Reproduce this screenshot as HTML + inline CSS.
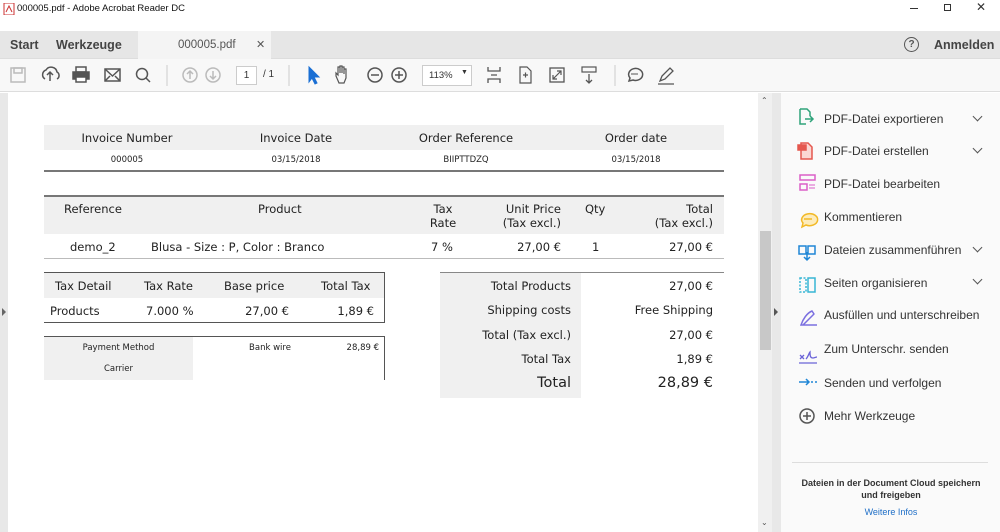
<!DOCTYPE html>
<html><head><meta charset="utf-8"><style>
*{margin:0;padding:0;box-sizing:border-box}
body{width:1000px;height:532px;overflow:hidden;position:relative;background:#fff;font-family:"Liberation Sans",sans-serif;color:#333}
.a{position:absolute}
.d{font-family:"DejaVu Sans","Liberation Sans",sans-serif;color:#222;white-space:nowrap}
.c{text-align:center}.r{text-align:right}
.g{background:#f0f0f0}
.ic{position:absolute}
.side{position:absolute;left:824px;font-size:12px;color:#333;white-space:nowrap}
.chev{position:absolute;left:974px;width:7px;height:7px;border-right:1.6px solid #555;border-bottom:1.6px solid #555;transform:rotate(45deg)}
</style></head><body>
<div class="a" style="left:0;top:0;width:1000px;height:31px;background:#fff"></div>
<svg class="ic" style="left:3px;top:3px" width="12" height="12"><rect x="1" y="0" width="10" height="12" fill="#fff" stroke="#c33"/><path d="M3 9 L6 3 L9 9" stroke="#c33" fill="none"/></svg>
<div class="a" style="left:17px;top:3px;font-size:9.5px;color:#111">000005.pdf - Adobe Acrobat Reader DC</div>
<div class="a" style="left:910px;top:8px;width:8px;height:1px;background:#333"></div>
<div class="a" style="left:944px;top:4px;width:7px;height:7px;border:1px solid #333"></div>
<div class="a" style="left:976px;top:0px;font-size:12px;color:#333">✕</div>
<div class="a" style="left:0;top:31px;width:1000px;height:28px;background:#e6e6e6;border-bottom:1px solid #ddd"></div>
<div class="a" style="left:138px;top:31px;width:133px;height:28px;background:#f4f4f4"></div>
<div class="a" style="left:10px;top:38px;font-size:12.5px;font-weight:bold;color:#444">Start</div>
<div class="a" style="left:56px;top:38px;font-size:12.5px;font-weight:bold;color:#444">Werkzeuge</div>
<div class="a" style="left:178px;top:39px;font-size:11.5px;color:#555">000005.pdf</div>
<div class="a" style="left:256px;top:38px;font-size:11px;color:#555">✕</div>
<div class="a" style="left:904px;top:37px;width:15px;height:15px;border:1.3px solid #555;border-radius:50%;font-size:10px;text-align:center;line-height:13px;color:#555;font-weight:bold">?</div>
<div class="a" style="left:934px;top:38px;font-size:12.5px;font-weight:bold;color:#444">Anmelden</div>
<div class="a" style="left:0;top:59px;width:1000px;height:33px;background:#f8f8f8;border-bottom:1px solid #ddd"></div>
<svg class="ic" style="left:0;top:59px" width="700" height="33" fill="none" stroke="#555" stroke-width="1.5">
<rect x="11" y="9" width="14" height="14" stroke="#bbb"/><rect x="14" y="9" width="8" height="5" stroke="#bbb"/>
<path d="M45 20 a5 5 0 0 1 1-9 a6 6 0 0 1 11 2 a4 4 0 0 1 0 7 M50 22 V13 M47 16 l3-3 3 3"/>
<rect x="73" y="13" width="16" height="7" fill="#555"/><rect x="76" y="8" width="10" height="5"/><rect x="76" y="18" width="10" height="5" fill="#fff"/>
<rect x="105" y="10" width="15" height="12"/><path d="M105 10 l7.5 7 7.5-7 M105 22 l5-5 M120 22 l-5-5"/>
<circle cx="142" cy="15" r="5.5"/><path d="M146 19 l4 4"/>
<path d="M167 6 V27" stroke="#ccc" stroke-width="1"/>
<circle cx="190" cy="16" r="7" stroke="#bbb"/><path d="M190 20 V12 M187 15 l3-3 3 3" stroke="#bbb"/>
<circle cx="213" cy="16" r="7" stroke="#bbb"/><path d="M213 12 V20 M210 17 l3 3 3-3" stroke="#bbb"/>
<path d="M289 6 V27" stroke="#ccc" stroke-width="1"/>
<path d="M309 8 V23 l3-4 3 6 2-1 -3-6 5 0 z" fill="#1a6fd4" stroke="#1a6fd4" stroke-width="1"/>
<path d="M339 24 l-3-7 v-3 l2 2 v-8 h2 v6 V7 h2 v7 V8 h2 v7 v-5 h2 v9 l-2 5 z" stroke-width="1.2"/>
<circle cx="375" cy="16" r="7"/><path d="M371 16 h8"/>
<circle cx="399" cy="16" r="7"/><path d="M395 16 h8 M399 12 v8"/>
<path d="M488 8 v4 h12 v-4 M488 24 v-4 h12 v4 M491 16 h6" stroke-width="1.3"/>
<path d="M520 8 h7 l4 4 v12 h-11 z M523 16 h5 M525.5 13.5 v5" stroke-width="1.2"/>
<rect x="550" y="9" width="14" height="14" stroke-width="1.3"/><path d="M553 20 l8-8 M557 12 h4 v4 M553 16 v4 h4" stroke-width="1.2"/>
<rect x="582" y="8" width="14" height="5" stroke-width="1.2"/><path d="M589 15 v9 M586 21 l3 3 3-3" stroke-width="1.3"/>
<path d="M615 6 V27" stroke="#ccc" stroke-width="1"/>
<path d="M629 22 l1-3 a7 6 0 1 1 3 2 z"/><path d="M631 15 h7" stroke-width="1"/>
<path d="M660 22 l2-5 8-8 3 3 -8 8 z M658 25 h16" stroke-width="1.3"/>
</svg>
<div class="a" style="left:236px;top:66px;width:21px;height:19px;background:#fff;border:1px solid #ccc;font-size:10px;text-align:center;line-height:17px;color:#333">1</div>
<div class="a" style="left:263px;top:69px;font-size:10px;color:#333">/ 1</div>
<div class="a" style="left:422px;top:65px;width:50px;height:21px;background:#fff;border:1px solid #ccc;font-size:9.5px;padding:4px 0 0 6px;color:#333">113%<span style="position:absolute;left:38px;top:3px;font-size:7px">▼</span></div>
<div class="a" style="left:0;top:93px;width:8px;height:439px;background:#e8e8e8"></div>
<div class="a" style="left:2px;top:308px;border-left:4px solid #666;border-top:4px solid transparent;border-bottom:4px solid transparent"></div>
<div class="a" style="left:758px;top:93px;width:14px;height:439px;background:#f0f0f0"></div>
<div class="a" style="left:760px;top:231px;width:11px;height:119px;background:#c8c8c8"></div>
<div class="a" style="left:761px;top:96px;font-size:8px;color:#555">⌃</div>
<div class="a" style="left:761px;top:518px;font-size:8px;color:#555">⌄</div>
<div class="a" style="left:772px;top:93px;width:9px;height:439px;background:#e8e8e8"></div>
<div class="a" style="left:774px;top:308px;border-left:4px solid #555;border-top:4px solid transparent;border-bottom:4px solid transparent"></div>
<div class="a" style="left:781px;top:93px;width:219px;height:439px;background:#fafafa"></div>
<svg class="ic" style="left:795px;top:105px" width="26" height="330" fill="none" stroke-width="1.5">
<path d="M5 4 h7 l3 3 v4 M5 4 v15 h6" stroke="#2fa37a"/><path d="M10 14 h8 M15 11 l3 3 -3 3" stroke="#2fa37a"/>
<path d="M6 38 h7 l4 4 v12 h-11 z" stroke="#e5574e" fill="#fbd7d3"/><rect x="3" y="40" width="8" height="5" fill="#e5574e" stroke="#e5574e"/>
<rect x="5" y="70" width="15" height="5" stroke="#db5fc8"/><rect x="5" y="79" width="7" height="6" stroke="#db5fc8"/><path d="M14 80 h6 M14 83 h6" stroke="#db5fc8" stroke-width="1"/>
<path d="M7 122 l1-4 a8 6 0 1 1 3 2 z" stroke="#f2b927" fill="#fdecbc"/><path d="M9 114 h8" stroke="#f2b927"/>
<rect x="4" y="141" width="7" height="8" stroke="#1f86d6"/><rect x="13" y="141" width="7" height="8" stroke="#1f86d6"/><path d="M12 147 v8 M9 152 l3 3 3-3" stroke="#1f86d6"/>
<rect x="5" y="173" width="6" height="14" stroke="#37b6d4" stroke-dasharray="2 1.5"/><rect x="13" y="173" width="7" height="14" stroke="#37b6d4"/>
<path d="M6 220 c2-6 6-12 11-14 l2 3 c-4 4-8 8-11 11 z M6 220 h16" stroke="#7b6fe0"/>
<path d="M5 250 l4 4 M9 250 l-4 4 M11 254 c2-2 3-6 4-7 c0 3 0 6 3 6 c1 0 3-1 4-1 M4 258 h18" stroke="#6b63d8" stroke-width="1.3"/>
<path d="M4 277 h10 M11 274 l3 3 -3 3 M16 277 h2 M20 277 h2" stroke="#1f86d6"/>
<circle cx="12" cy="311" r="7" stroke="#555"/><path d="M8 311 h8 M12 307 v8" stroke="#555"/>
</svg>
<div class="side" style="top:112px">PDF-Datei exportieren</div><div class="chev" style="top:113px"></div>
<div class="side" style="top:144px">PDF-Datei erstellen</div><div class="chev" style="top:145px"></div>
<div class="side" style="top:177px">PDF-Datei bearbeiten</div>
<div class="side" style="top:210px">Kommentieren</div>
<div class="side" style="top:243px">Dateien zusammenführen</div><div class="chev" style="top:244px"></div>
<div class="side" style="top:276px">Seiten organisieren</div><div class="chev" style="top:276px"></div>
<div class="side" style="top:308px">Ausfüllen und unterschreiben</div>
<div class="side" style="top:342px">Zum Unterschr. senden</div>
<div class="side" style="top:376px">Senden und verfolgen</div>
<div class="side" style="top:409px">Mehr Werkzeuge</div>
<div class="a" style="left:792px;top:462px;width:196px;height:1px;background:#ddd"></div>
<div class="a c" style="left:786px;top:477px;width:210px;font-size:9px;font-weight:bold;color:#333;line-height:12px">Dateien in der Document Cloud speichern<br>und freigeben</div>
<div class="a c" style="left:786px;top:507px;width:210px;font-size:9px;color:#1f6fc7">Weitere Infos</div>

<div class="a g" style="left:44px;top:125px;width:680px;height:25px"></div>
<div class="a" style="left:44px;top:170px;width:680px;height:2px;background:#777"></div>
<div class="a d c" style="left:42px;top:131px;width:170px;font-size:11.5px">Invoice Number</div>
<div class="a d c" style="left:211px;top:131px;width:170px;font-size:11.5px">Invoice Date</div>
<div class="a d c" style="left:381px;top:131px;width:170px;font-size:11.5px">Order Reference</div>
<div class="a d c" style="left:551px;top:131px;width:170px;font-size:11.5px">Order date</div>
<div class="a d c" style="left:42px;top:155px;width:170px;font-size:8.5px">000005</div>
<div class="a d c" style="left:211px;top:155px;width:170px;font-size:8.5px">03/15/2018</div>
<div class="a d c" style="left:381px;top:155px;width:170px;font-size:8.5px">BIIPTTDZQ</div>
<div class="a d c" style="left:551px;top:155px;width:170px;font-size:8.5px">03/15/2018</div>

<div class="a" style="left:44px;top:195px;width:680px;height:2px;background:#777"></div>
<div class="a g" style="left:44px;top:197px;width:680px;height:37px"></div>
<div class="a" style="left:44px;top:258px;width:680px;height:1px;background:#bbb"></div>
<div class="a d" style="left:64px;top:202px;font-size:11.5px">Reference</div>
<div class="a d" style="left:258px;top:202px;font-size:11.5px">Product</div>
<div class="a d c" style="left:418px;top:202px;width:50px;font-size:11.5px;line-height:14px">Tax<br>Rate</div>
<div class="a d r" style="left:480px;top:202px;width:81px;font-size:11.5px;line-height:14px">Unit Price<br>(Tax excl.)</div>
<div class="a d" style="left:585px;top:202px;font-size:11.5px">Qty</div>
<div class="a d r" style="left:630px;top:202px;width:83px;font-size:11.5px;line-height:14px">Total<br>(Tax excl.)</div>
<div class="a d" style="left:70px;top:240px;font-size:11.5px">demo_2</div>
<div class="a d" style="left:151px;top:240px;font-size:11.5px">Blusa - Size : P, Color : Branco</div>
<div class="a d" style="left:431px;top:240px;font-size:11.5px">7 %</div>
<div class="a d r" style="left:480px;top:240px;width:81px;font-size:11.5px">27,00 €</div>
<div class="a d" style="left:592px;top:240px;font-size:11.5px">1</div>
<div class="a d r" style="left:630px;top:240px;width:83px;font-size:11.5px">27,00 €</div>

<div class="a g" style="left:44px;top:273px;width:340px;height:25px"></div>
<div class="a" style="left:44px;top:272px;width:341px;height:1px;background:#555"></div>
<div class="a" style="left:384px;top:272px;width:1px;height:51px;background:#555"></div>
<div class="a" style="left:44px;top:322px;width:341px;height:1px;background:#555"></div>
<div class="a d" style="left:55px;top:279px;font-size:11.5px">Tax Detail</div>
<div class="a d" style="left:144px;top:279px;font-size:11.5px">Tax Rate</div>
<div class="a d" style="left:224px;top:279px;font-size:11.5px">Base price</div>
<div class="a d" style="left:321px;top:279px;font-size:11.5px">Total Tax</div>
<div class="a d" style="left:50px;top:304px;font-size:11.5px">Products</div>
<div class="a d" style="left:146px;top:304px;font-size:11.5px">7.000 %</div>
<div class="a d r" style="left:200px;top:304px;width:89px;font-size:11.5px">27,00 €</div>
<div class="a d r" style="left:300px;top:304px;width:74px;font-size:11.5px">1,89 €</div>

<div class="a" style="left:44px;top:336px;width:341px;height:1px;background:#555"></div>
<div class="a" style="left:384px;top:336px;width:1px;height:44px;background:#555"></div>
<div class="a g" style="left:44px;top:337px;width:149px;height:43px"></div>
<div class="a d c" style="left:44px;top:343px;width:149px;font-size:8.5px">Payment Method</div>
<div class="a d c" style="left:44px;top:364px;width:149px;font-size:8.5px">Carrier</div>
<div class="a d c" style="left:220px;top:343px;width:100px;font-size:8.5px">Bank wire</div>
<div class="a d r" style="left:300px;top:343px;width:79px;font-size:8.5px">28,89 €</div>

<div class="a" style="left:440px;top:272px;width:284px;height:1px;background:#888"></div>
<div class="a g" style="left:440px;top:273px;width:141px;height:125px"></div>
<div class="a d r" style="left:440px;top:279px;width:131px;font-size:11.5px">Total Products</div>
<div class="a d r" style="left:440px;top:303px;width:131px;font-size:11.5px">Shipping costs</div>
<div class="a d r" style="left:440px;top:328px;width:131px;font-size:11.5px">Total (Tax excl.)</div>
<div class="a d r" style="left:440px;top:352px;width:131px;font-size:11.5px">Total Tax</div>
<div class="a d r" style="left:440px;top:375px;width:131px;font-size:14.5px">Total</div>
<div class="a d r" style="left:590px;top:279px;width:123px;font-size:11.5px">27,00 €</div>
<div class="a d r" style="left:590px;top:303px;width:123px;font-size:11.5px">Free Shipping</div>
<div class="a d r" style="left:590px;top:328px;width:123px;font-size:11.5px">27,00 €</div>
<div class="a d r" style="left:590px;top:352px;width:123px;font-size:11.5px">1,89 €</div>
<div class="a d r" style="left:590px;top:375px;width:123px;font-size:14.5px">28,89 €</div>
</body></html>
